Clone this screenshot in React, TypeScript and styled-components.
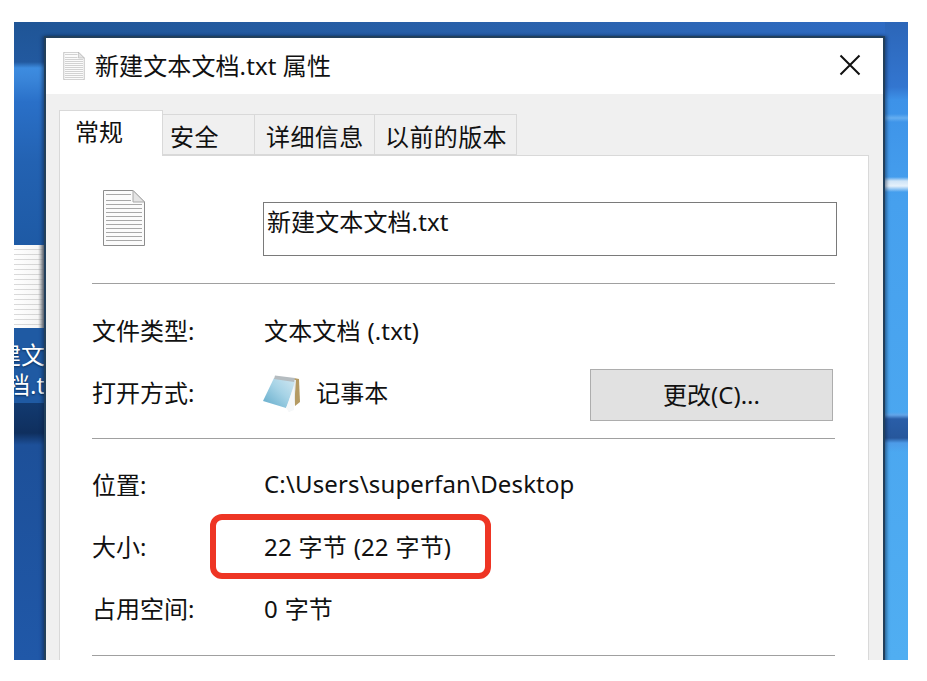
import React from 'react';
import styled, { createGlobalStyle } from 'styled-components';

const GlobalStyle = createGlobalStyle`
  html, body {
    margin: 0;
    padding: 0;
    background: #fff;
  }
  body {
    height: 681px;
    overflow: hidden;
    font-family: "Noto Sans", "Noto Sans CJK SC", sans-serif;
    color: #111;
  }
`;

const Desktop = styled.div`
  position: relative;
  box-sizing: border-box;
  width: 894px;
  height: 638px;
  margin: 22px 0 0 14px;
  padding: 14px 0 0 30px;
  overflow: hidden;
  background:
    linear-gradient(180deg, transparent 0, transparent 390px, #62a4e8 393px, #2a5ea8 397px, #26579c 416px, #4d9be8 421px, transparent 430px) right / 23px 100% no-repeat,
    linear-gradient(180deg, transparent 155px, #cfe4f7 159px, #e6f1fb 164px, transparent 170px) right / 23px 100% no-repeat,
    linear-gradient(180deg, transparent 92px, #66aef0 96px, transparent 100px) right / 23px 100% no-repeat,
    linear-gradient(180deg, #2c66b8 0, #3376d0 65px, #3d92e8 78px, #46a0ee 180px, #50aef2 638px) right / 23px 100% no-repeat,
    linear-gradient(180deg, #1f5596 0, #22599f 40px, #3d8ce0 46px, #3a86da 56px, #2a70c8 80px, #2362b2 140px, #1e5aa5 223px, #1d5099 425px, #2058a8 638px) left / 30px 100% no-repeat,
    linear-gradient(90deg, #1f5596 0, #2a62ad 60%, #2f6cc4 100%) top / 100% 14px no-repeat;
`;

const DesktopItem = styled.div`
  position: absolute;
  left: 0;
  top: 223px;
  width: 30px;
  display: flex;
  flex-direction: column;
  overflow: hidden;
`;

const ItemThumb = styled.div`
  height: 83px;
  background:
    repeating-linear-gradient(180deg, transparent 0 4px, rgba(150, 150, 150, 0.35) 4px 5px),
    linear-gradient(90deg, #fff 0, #f5f5f5 80%, #999 100%);
`;

const ItemLabel = styled.div`
  height: 75px;
  box-sizing: border-box;
  padding-top: 12px;
  background: #1f5aa3;
  color: #fff;
  font-size: 24px;
  line-height: 30px;
  white-space: nowrap;
  text-shadow: 0 1px 2px #0b2c55;
`;

const ItemLine = styled.div<{ $shift: number }>`
  margin-left: ${(p) => p.$shift}px;
`;

const ItemShade = styled.div`
  height: 42px;
  background: linear-gradient(180deg, #123a70 0, #0f2f5e 30px, #1d5099 42px);
`;

const Dialog = styled.div`
  position: relative;
  box-sizing: border-box;
  width: 841px;
  height: 640px;
  border: 2px solid #22405c;
  border-bottom: 0;
  background: #f0f0f0;
  box-shadow: -2px 0 3px rgba(10, 30, 60, 0.45), 2px 0 3px rgba(10, 30, 60, 0.45);
`;

const TitleBar = styled.div`
  height: 56px;
  display: flex;
  align-items: center;
  background: #fff;
  padding: 0 22px 0 17px;
`;

const TitleText = styled.div`
  flex: 1;
  margin-left: 10px;
  font-size: 24px;
  line-height: 32px;
  letter-spacing: 0.1px;
`;

const CloseButton = styled.div`
  display: flex;
  width: 22px;
  height: 22px;
  margin-bottom: 2px;
`;

const Tabs = styled.div`
  display: flex;
  align-items: flex-end;
  height: 45px;
  margin: 16px 0 0 13px;
  position: relative;
  z-index: 1;
`;

const Tab = styled.div<{ $width: number; $pad: number; $active?: boolean }>`
  box-sizing: border-box;
  width: ${(p) => p.$width}px;
  height: ${(p) => (p.$active ? 46 : 41)}px;
  margin-bottom: ${(p) => (p.$active ? -1 : 0)}px;
  border: 1px solid #d9d9d9;
  border-left-width: ${(p) => (p.$active ? 1 : 0)}px;
  border-bottom-width: ${(p) => (p.$active ? 0 : 1)}px;
  background: ${(p) => (p.$active ? '#fff' : '#f0f0f0')};
  font-size: 24px;
  line-height: ${(p) => (p.$active ? 42 : 43)}px;
  padding-left: ${(p) => p.$pad}px;
  letter-spacing: ${(p) => (p.$active ? 0 : 0.4)}px;
  white-space: nowrap;
`;

const Panel = styled.div`
  box-sizing: border-box;
  width: 810px;
  height: 520px;
  margin-left: 13px;
  border: 1px solid #d9d9d9;
  background: #fff;
  padding: 0 33px 0 32px;
`;

const Header = styled.div`
  display: flex;
  height: 127px;
  box-sizing: border-box;
  padding: 34px 0 0 11px;
`;

const NameField = styled.div`
  box-sizing: border-box;
  width: 574px;
  height: 54px;
  margin: 12px -3px 0 118px;
  border: 1px solid #7a7a7a;
  padding-left: 3px;
  font-size: 24px;
  line-height: 38px;
  letter-spacing: 0.1px;
`;

const Divider = styled.div`
  height: 1px;
  background: #a0a0a0;
`;

const Section = styled.div<{ $height: number; $top: number }>`
  box-sizing: border-box;
  height: ${(p) => p.$height}px;
  padding-top: ${(p) => p.$top}px;
`;

const Row = styled.div`
  display: flex;
  align-items: center;
  box-sizing: border-box;
  height: 62px;
  padding-bottom: 4px;
  font-size: 24px;
  letter-spacing: 0.15px;
  word-spacing: 0.4px;
  white-space: nowrap;
`;

const Label = styled.div`
  width: 172px;
  flex: none;
  letter-spacing: 0;
`;

const AppIcon = styled.div`
  display: flex;
  margin: 6px 14px 0 -2px;
`;

const ChangeButton = styled.div`
  box-sizing: border-box;
  width: 243px;
  height: 52px;
  margin: 8px 2px 0 auto;
  border: 1px solid #adadad;
  background: #e1e1e1;
  font-size: 24px;
  letter-spacing: 0;
  line-height: 50px;
  text-align: center;
`;

const Highlight = styled.div`
  position: absolute;
  left: 164px;
  top: 476px;
  width: 281px;
  height: 65px;
  box-sizing: border-box;
  border: 6px solid #ee3524;
  border-radius: 12px;
`;

const PageIcon = ({ width, height }: { width: number; height: number }) => (
  <svg width={width} height={height} viewBox="0 0 42 56" style={{ flex: 'none' }}>
    <path d="M0.5 0.5H30L41.5 12V55.5H0.5Z" fill="#fbfbfb" stroke="#8c8c8c" />
    <path d="M30 0.5V12H41.5Z" fill="#e4e4e4" stroke="#a8a8a8" />
    {[4, 10].map((y) => (
      <rect key={y} x="3" y={y} width="25" height="1" fill="#a8a8a8" />
    ))}
    {[14, 18, 22, 26, 30, 34, 38, 42, 46, 50].map((y) => (
      <rect key={y} x="3" y={y} width="36" height="1" fill="#a8a8a8" />
    ))}
  </svg>
);

const NotepadIcon = () => (
  <svg width="40" height="38" viewBox="0 0 40 38" style={{ flex: 'none' }}>
    <defs>
      <linearGradient id="pad" x1="0" y1="1" x2="1" y2="0">
        <stop offset="0" stopColor="#5fa9c9" />
        <stop offset="0.55" stopColor="#a6d3e6" />
        <stop offset="1" stopColor="#d2e8f2" />
      </linearGradient>
    </defs>
    <path d="M32 3L37 4L38 27L33 31Z" fill="#b49a62" />
    <path d="M12 3L34 5L32 33L27 37Z" fill="#e8edf0" />
    <path d="M12 3L33 6L26 29L24 33L1 26Z" fill="url(#pad)" />
    <path d="M13 0.5L33 3L32 7L12 4Z" fill="#b5bcc0" />
    <path d="M24 33L32 11L32 35L27 37Z" fill="#f6f8f9" />
  </svg>
);

export default function App() {
  return (
    <>
      <GlobalStyle />
      <Desktop>
        <DesktopItem>
          <ItemThumb />
          <ItemLabel>
            <ItemLine $shift={-41}>新建文本文档</ItemLine>
            <ItemLine $shift={-8}>档.txt</ItemLine>
          </ItemLabel>
          <ItemShade />
        </DesktopItem>
        <Dialog>
          <TitleBar>
            <PageIcon width={22} height={28} />
            <TitleText>新建文本文档.txt 属性</TitleText>
            <CloseButton>
              <svg width="22" height="22" viewBox="0 0 22 22">
                <path d="M1.5 1.5L20.5 20.5M20.5 1.5L1.5 20.5" stroke="#111" strokeWidth="2" fill="none" />
              </svg>
            </CloseButton>
          </TitleBar>
          <Tabs>
            <Tab $width={104} $pad={15} $active>常规</Tab>
            <Tab $width={92} $pad={7}>安全</Tab>
            <Tab $width={120} $pad={11}>详细信息</Tab>
            <Tab $width={142} $pad={10}>以前的版本</Tab>
          </Tabs>
          <Panel>
            <Header>
              <PageIcon width={42} height={56} />
              <NameField>新建文本文档.txt</NameField>
            </Header>
            <Divider />
            <Section $height={154} $top={16}>
              <Row>
                <Label>文件类型:</Label>
                文本文档 (.txt)
              </Row>
              <Row>
                <Label>打开方式:</Label>
                <AppIcon>
                  <NotepadIcon />
                </AppIcon>
                记事本
                <ChangeButton>更改(C)...</ChangeButton>
              </Row>
            </Section>
            <Divider />
            <Section $height={216} $top={15}>
              <Row>
                <Label>位置:</Label>
                C:\Users\superfan\Desktop
              </Row>
              <Row>
                <Label>大小:</Label>
                22 字节 (22 字节)
              </Row>
              <Row>
                <Label>占用空间:</Label>
                0 字节
              </Row>
            </Section>
            <Divider />
          </Panel>
          <Highlight />
        </Dialog>
      </Desktop>
    </>
  );
}
